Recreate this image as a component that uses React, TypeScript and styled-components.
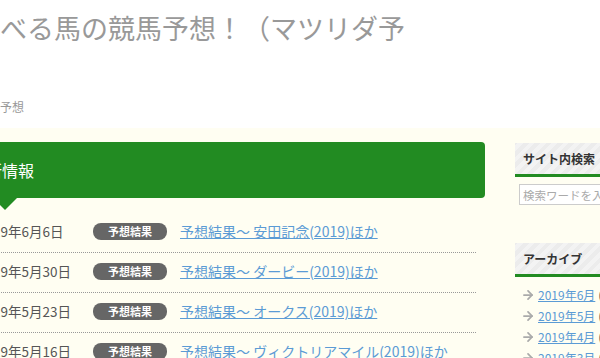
import styled, { createGlobalStyle } from "styled-components";
import { ArrowRight } from "lucide-react";

const GlobalStyle = createGlobalStyle`
  html, body {
    margin: 0;
    padding: 0;
    overflow: hidden;
    background: #fffef2;
    font-family: "Noto Sans CJK JP", "Noto Sans", sans-serif;
  }
`;

const green = "#228b22";

const Header = styled.header`
  background: #fff;
  height: 128px;
  padding-top: 9px;
  box-sizing: border-box;
`;

const HeaderInner = styled.div`
  margin-left: -46px;
`;

const SiteTitle = styled.h1`
  margin: 0;
  padding-left: 19px;
  width: 432px;
  height: 38px;
  overflow: hidden;
  font-size: 27px;
  line-height: 38px;
  font-weight: 400;
  color: #999;
`;

const Tagline = styled.p`
  margin: 52px 0 0;
  padding-left: 22px;
  font-size: 12px;
  line-height: 16px;
  color: #999;
  white-space: nowrap;
`;

const Body = styled.div`
  padding-top: 14px;
`;

const Container = styled.div`
  display: flex;
  gap: 30px;
  margin-left: -46px;
`;

const Main = styled.main`
  width: 531px;
  flex-shrink: 0;
`;

const SectionTitle = styled.h2`
  position: relative;
  margin: 0;
  height: 56px;
  display: flex;
  align-items: center;
  padding-left: 16px;
  background: ${green};
  border-radius: 4px;
  color: #fff;
  font-size: 16px;
  font-weight: 400;

  &::after {
    content: "";
    position: absolute;
    left: 39px;
    top: 100%;
    border-style: solid;
    border-width: 12px 12px 0 12px;
    border-color: ${green} transparent transparent transparent;
  }
`;

const NewsList = styled.ul`
  list-style: none;
  margin: 15px 9px 0 24px;
  padding: 0;
`;

const NewsRow = styled.li`
  display: flex;
  align-items: center;
  height: 36px;
  padding-bottom: 3px;
  border-bottom: 1px dotted #999;
  font-size: 13.5px;
  white-space: nowrap;
`;

const NewsDate = styled.span`
  width: 115px;
  flex-shrink: 0;
  color: #555;
`;

const Badge = styled.span`
  width: 74px;
  height: 17px;
  flex-shrink: 0;
  display: flex;
  align-items: center;
  justify-content: center;
  background: #666;
  border-radius: 8px;
  color: #fff;
  font-size: 11px;
  font-weight: 700;
  margin-right: 13px;
`;

const NewsLink = styled.a`
  color: #5b9bd5;
  font-size: 14px;
  text-decoration: underline;
`;

const Sidebar = styled.aside`
  width: 300px;
  flex-shrink: 0;
  padding-top: 1px;
`;

const Widget = styled.section<{ $gap?: number }>`
  margin-top: ${(p) => p.$gap ?? 0}px;
`;

const WidgetTitle = styled.h3`
  margin: 0;
  height: 31px;
  display: flex;
  align-items: center;
  padding-left: 8px;
  background: repeating-linear-gradient(
    -45deg,
    #ececec 0,
    #ececec 4px,
    #f3f3f3 4px,
    #f3f3f3 8px
  );
  border-bottom: 3px solid ${green};
  color: #333;
  font-size: 12px;
  font-weight: 700;
`;

const SearchInput = styled.input`
  display: block;
  margin: 7px 0 0 4px;
  width: 200px;
  height: 21px;
  box-sizing: border-box;
  border: 1px solid #ccc;
  padding: 0 3px;
  font-family: inherit;
  font-size: 11.5px;
  background: #fff;
  &::placeholder {
    color: #aaa;
  }
`;

const ArchiveList = styled.ul`
  list-style: none;
  margin: 7px 0 0;
  padding: 0 0 0 6px;
`;

const ArchiveItem = styled.li`
  display: flex;
  align-items: center;
  height: 21px;
  font-size: 12px;
  color: #555;
  white-space: nowrap;
`;

const Arrow = styled(ArrowRight)`
  color: #aaa;
  margin-right: 3px;
  flex-shrink: 0;
`;

const ArchiveLink = styled.a`
  color: #5b9bd5;
  text-decoration: underline;
  margin-right: 3px;
`;

const news = [
  { date: "2019年6月6日", title: "予想結果～ 安田記念(2019)ほか" },
  { date: "2019年5月30日", title: "予想結果～ ダービー(2019)ほか" },
  { date: "2019年5月23日", title: "予想結果～ オークス(2019)ほか" },
  { date: "2019年5月16日", title: "予想結果～ ヴィクトリアマイル(2019)ほか" },
];

const archives = [
  { month: "2019年6月", count: 1 },
  { month: "2019年5月", count: 4 },
  { month: "2019年4月", count: 4 },
  { month: "2019年3月", count: 5 },
];

export default function App() {
  return (
    <>
      <GlobalStyle />
      <Header>
        <HeaderInner>
          <SiteTitle>遊べる馬の競馬予想！（マツリダ予想）</SiteTitle>
          <Tagline>競馬予想</Tagline>
        </HeaderInner>
      </Header>
      <Body>
        <Container>
          <Main>
            <SectionTitle>最新情報</SectionTitle>
            <NewsList>
              {news.map((n) => (
                <NewsRow key={n.date}>
                  <NewsDate>{n.date}</NewsDate>
                  <Badge>予想結果</Badge>
                  <NewsLink href="#">{n.title}</NewsLink>
                </NewsRow>
              ))}
            </NewsList>
          </Main>
          <Sidebar>
            <Widget>
              <WidgetTitle>サイト内検索</WidgetTitle>
              <SearchInput placeholder="検索ワードを入力" />
            </Widget>
            <Widget $gap={38}>
              <WidgetTitle>アーカイブ</WidgetTitle>
              <ArchiveList>
                {archives.map((a) => (
                  <ArchiveItem key={a.month}>
                    <Arrow size={14} strokeWidth={3} />
                    <ArchiveLink href="#">{a.month}</ArchiveLink>({a.count})
                  </ArchiveItem>
                ))}
              </ArchiveList>
            </Widget>
          </Sidebar>
        </Container>
      </Body>
    </>
  );
}
